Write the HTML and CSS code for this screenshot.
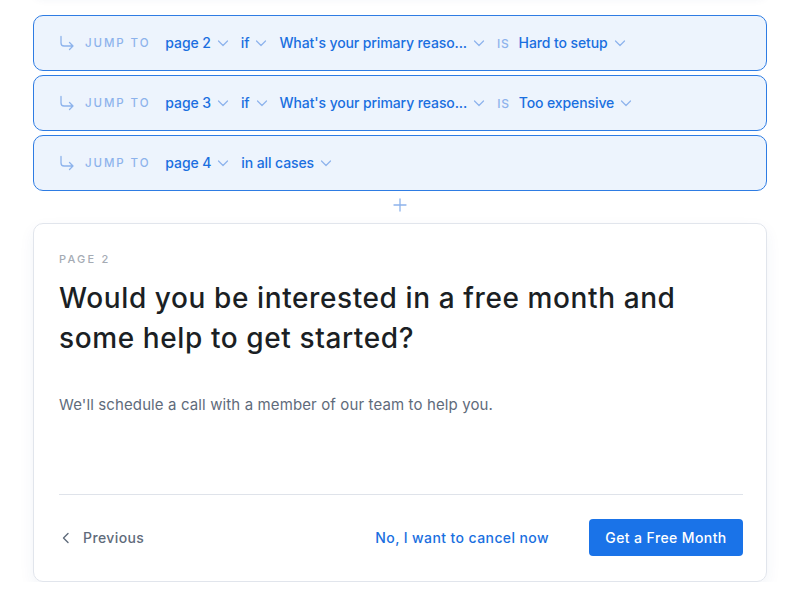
FILE: index.html
```html
<!DOCTYPE html>
<html>
<head>
<meta charset="utf-8">
<link rel="stylesheet" href="styles.css">
</head>
<body>
<div class="wrap">
  <div class="prev-card"></div>
  <div class="rules">
    <div class="rule">
      <svg class="jump-icon" width="16" height="16" viewBox="0 0 16 16"><path d="M2 1.5v6.5a3 3 0 0 0 3 3h9M10.5 7.5l3.5 3.5-3.5 3.5" fill="none" stroke="currentColor" stroke-width="1.3" stroke-linecap="round" stroke-linejoin="round"/></svg>
      <span class="label">JUMP TO</span>
      <span class="sel">page 2<svg class="chev" viewBox="0 0 12 12"><path d="M1.5 4l4.5 4.5 4.5-4.5" fill="none" stroke="currentColor" stroke-width="1.2" stroke-linecap="round" stroke-linejoin="round"/></svg></span>
      <span class="sel">if<svg class="chev" viewBox="0 0 12 12"><path d="M1.5 4l4.5 4.5 4.5-4.5" fill="none" stroke="currentColor" stroke-width="1.2" stroke-linecap="round" stroke-linejoin="round"/></svg></span>
      <span class="sel">What's your primary reaso...<svg class="chev" viewBox="0 0 12 12"><path d="M1.5 4l4.5 4.5 4.5-4.5" fill="none" stroke="currentColor" stroke-width="1.2" stroke-linecap="round" stroke-linejoin="round"/></svg></span>
      <span class="is">IS</span>
      <span class="sel">Hard to setup<svg class="chev" viewBox="0 0 12 12"><path d="M1.5 4l4.5 4.5 4.5-4.5" fill="none" stroke="currentColor" stroke-width="1.2" stroke-linecap="round" stroke-linejoin="round"/></svg></span>
    </div>
    <div class="rule">
      <svg class="jump-icon" width="16" height="16" viewBox="0 0 16 16"><path d="M2 1.5v6.5a3 3 0 0 0 3 3h9M10.5 7.5l3.5 3.5-3.5 3.5" fill="none" stroke="currentColor" stroke-width="1.3" stroke-linecap="round" stroke-linejoin="round"/></svg>
      <span class="label">JUMP TO</span>
      <span class="sel">page 3<svg class="chev" viewBox="0 0 12 12"><path d="M1.5 4l4.5 4.5 4.5-4.5" fill="none" stroke="currentColor" stroke-width="1.2" stroke-linecap="round" stroke-linejoin="round"/></svg></span>
      <span class="sel">if<svg class="chev" viewBox="0 0 12 12"><path d="M1.5 4l4.5 4.5 4.5-4.5" fill="none" stroke="currentColor" stroke-width="1.2" stroke-linecap="round" stroke-linejoin="round"/></svg></span>
      <span class="sel">What's your primary reaso...<svg class="chev" viewBox="0 0 12 12"><path d="M1.5 4l4.5 4.5 4.5-4.5" fill="none" stroke="currentColor" stroke-width="1.2" stroke-linecap="round" stroke-linejoin="round"/></svg></span>
      <span class="is">IS</span>
      <span class="sel">Too expensive<svg class="chev" viewBox="0 0 12 12"><path d="M1.5 4l4.5 4.5 4.5-4.5" fill="none" stroke="currentColor" stroke-width="1.2" stroke-linecap="round" stroke-linejoin="round"/></svg></span>
    </div>
    <div class="rule">
      <svg class="jump-icon" width="16" height="16" viewBox="0 0 16 16"><path d="M2 1.5v6.5a3 3 0 0 0 3 3h9M10.5 7.5l3.5 3.5-3.5 3.5" fill="none" stroke="currentColor" stroke-width="1.3" stroke-linecap="round" stroke-linejoin="round"/></svg>
      <span class="label">JUMP TO</span>
      <span class="sel">page 4<svg class="chev" viewBox="0 0 12 12"><path d="M1.5 4l4.5 4.5 4.5-4.5" fill="none" stroke="currentColor" stroke-width="1.2" stroke-linecap="round" stroke-linejoin="round"/></svg></span>
      <span class="sel">in all cases<svg class="chev" viewBox="0 0 12 12"><path d="M1.5 4l4.5 4.5 4.5-4.5" fill="none" stroke="currentColor" stroke-width="1.2" stroke-linecap="round" stroke-linejoin="round"/></svg></span>
    </div>
  </div>
  <div class="add">
    <svg width="14" height="14" viewBox="0 0 14 14"><path d="M7 1v12M1 7h12" fill="none" stroke="currentColor" stroke-width="1.3" stroke-linecap="round"/></svg>
  </div>
  <div class="page">
    <div class="eyebrow">PAGE 2</div>
    <h1 class="title">Would you be interested in a free month and some help to get started?</h1>
    <p class="desc">We'll schedule a call with a member of our team to help you.</p>
    <div class="footer">
      <span class="prev">
        <svg width="10" height="12" viewBox="0 0 10 12"><path d="M7 1.5L2.5 6 7 10.5" fill="none" stroke="currentColor" stroke-width="1.4" stroke-linecap="round" stroke-linejoin="round"/></svg>
        Previous
      </span>
      <span class="spacer"></span>
      <span class="cancel">No, I want to cancel now</span>
      <span class="btn">Get a Free Month</span>
    </div>
  </div>
</div>
</body>
</html>
```

FILE: styles.css
```css
* { box-sizing: border-box; }
html, body { margin: 0; padding: 0; background: #fff; }
body { font-family: Inter, "Noto Sans", sans-serif; overflow: hidden; }
.wrap { padding: 0 33px; }
.prev-card {
  height: 10px;
  margin-top: -15px;
  margin-bottom: 20px;
  border-radius: 0 0 10px 10px;
  box-shadow: 0 4px 10px rgba(40, 70, 130, 0.06);
}
.rules { display: flex; flex-direction: column; gap: 4px; }
.rule {
  height: 56px;
  display: flex;
  align-items: center;
  padding: 0 0 0 25px;
  background: #edf4fd;
  border: 1.5px solid #2e7ce3;
  border-radius: 10px;
  color: #1a6fe0;
}
.jump-icon { color: #8db3ec; margin-right: 10px; margin-top: -1px; }
.label {
  font-size: 11.5px;
  letter-spacing: 1.9px;
  color: #8db3ec;
  font-weight: 500;
  margin-right: 15px;
}
.sel {
  display: inline-flex;
  align-items: center;
  font-size: 14px;
  font-weight: 500;
  color: #1a6fe0;
  margin-right: 12px;
  letter-spacing: -0.1px;
  margin-top: -1px;
}
.chev { width: 12px; height: 12px; margin-left: 6px; color: #8db3ec; }
.is { font-size: 12px; color: #8db3ec; letter-spacing: 0.8px; margin-right: 9px; font-weight: 500; }
.add {
  height: 32px;
  display: flex;
  align-items: center;
  justify-content: center;
  color: #8db3ec;
  padding-bottom: 5px;
}
.page {
  border: 1px solid #e1e5ec;
  border-radius: 10px;
  padding: 28px 23px 25px 25px;
  box-shadow: 0 6px 16px rgba(40, 70, 130, 0.06);
  height: 359px;
  display: flex;
  flex-direction: column;
}
.eyebrow {
  font-size: 11px;
  letter-spacing: 2.2px;
  color: #a5abb4;
  font-weight: 500;
  line-height: 14px;
}
.title {
  margin: 12px 0 0;
  font-size: 28px;
  line-height: 40px;
  font-weight: 500;
  color: #1b1f24;
  letter-spacing: 0.6px;
}
.desc {
  margin: 36px 0 0;
  font-size: 15px;
  line-height: 22px;
  color: #5f6b7b;
  letter-spacing: 0.12px;
}
.footer {
  margin-top: auto;
  border-top: 1px solid #dfe3ea;
  padding-top: 24px;
  display: flex;
  align-items: center;
}
.prev {
  display: inline-flex;
  align-items: center;
  gap: 12px;
  color: #5f6b7b;
  font-size: 14px;
  font-weight: 500;
  letter-spacing: 0.4px;
  padding-left: 2px;
}
.spacer { flex: 1; }
.cancel {
  color: #1a6fe0;
  font-size: 14px;
  font-weight: 500;
  letter-spacing: 0.4px;
  margin-right: 40px;
}
.btn {
  background: #1a73e8;
  color: #fff;
  font-size: 14px;
  font-weight: 500;
  letter-spacing: 0.4px;
  height: 37px;
  width: 154px;
  border-radius: 4px;
  display: inline-flex;
  align-items: center;
  justify-content: center;
}
```
